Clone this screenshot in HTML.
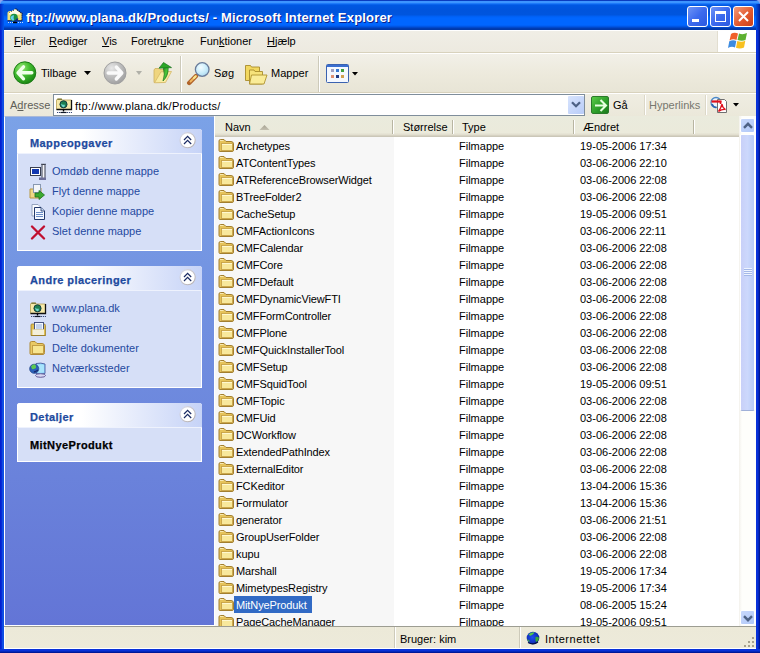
<!DOCTYPE html>
<html><head><meta charset="utf-8">
<style>
*{margin:0;padding:0;box-sizing:border-box}
html,body{width:760px;height:653px;overflow:hidden;background:#8AA4F0}
body{position:relative;font-family:"Liberation Sans",sans-serif;font-size:11px;color:#000}
.a{position:absolute}
svg{display:block}
#title{left:0;top:0;width:760px;height:30px;border-radius:5px 5px 0 0;background:linear-gradient(#0A3CC0 0px,#0A3CC0 1px,#3D95FF 1px,#3D95FF 3px,#1E7BFA 3px,#1E7BFA 4px,#0963EC 4px,#0963EC 5px,#0058E3 5px,#0054DC 10px,#0055DE 15px,#005FF2 16px,#0066FF 18px,#0066FF 25px,#005BEF 26px,#004FD8 27px,#0040BC 28px,#0038A8 29px,#0038A8 30px);}
#tedgeL{left:0;top:4px;width:4px;height:26px;background:linear-gradient(90deg,#0028C0,#0040D8 2px,#0058EC)}
#tedgeR{left:756px;top:4px;width:4px;height:26px;background:linear-gradient(90deg,#0050E0,#0038C0 2px,#00209A)}
#ttext{left:26px;top:10px;color:#fff;font-weight:bold;font-size:13px;letter-spacing:0.18px;text-shadow:1px 1px #0A1E8A;white-space:nowrap}
.tb{position:absolute;top:6px;width:21px;height:21px;border:1px solid #fff;border-radius:3px}
#frameL{left:0;top:30px;width:4px;height:623px;background:linear-gradient(90deg,#0019CF,#0831D9 2px,#166AEE 3px,#0831D9 4px)}
#frameR{left:756px;top:30px;width:4px;height:623px;background:linear-gradient(90deg,#0831D9,#0831D9 2px,#001EA0 3px,#001090)}
#frameB{left:0;top:649px;width:760px;height:4px;background:linear-gradient(#0831D9,#0831D9 2px,#001EA0 3px,#001090)}
#menu{left:4px;top:30px;width:752px;height:23px;background:linear-gradient(#F0EEE6,#EDEAE0);border-top:1px solid #fff;border-bottom:1px solid #D8D2BD}
.mi{position:absolute;top:4px;white-space:nowrap}
#logo{left:717px;top:31px;width:39px;height:21px;background:#fff;border-left:1px solid #E2DED0}
#tool{left:4px;top:53px;width:752px;height:40px;background:linear-gradient(#F2F0E8,#EDEADD 50%,#E8E5D6);border-top:1px solid #fff;border-bottom:1px solid #D8D2BD}
.tt{position:absolute;top:13px;white-space:nowrap}
.sep{position:absolute;width:2px;border-left:1px solid #CDCABA;border-right:1px solid #fff}
#addr{left:4px;top:93px;width:752px;height:23px;background:linear-gradient(#EFEDE2,#EBE8DA);border-top:1px solid #fff}
#abox{left:53px;top:94px;width:532px;height:22px;background:#fff;border:1px solid #7F8E9B}
#left{left:4px;top:116px;width:210px;height:510px;background:linear-gradient(#7BA2E7,#6375D6);border-left:1px solid #fff;border-top:1px solid #A8B8D8;border-bottom:1px solid #fff}
.panel{position:absolute;left:12px;width:185px;background:#D6DFF7;border:1px solid #fff;border-top:0;border-radius:3px 3px 0 0}
.pl{position:absolute;left:-1px;top:24px;width:185px;height:1px;background:#EEF2FD}
.ph{position:absolute;left:-1px;top:0;width:185px;height:24px;border-radius:3px 3px 0 0;background:linear-gradient(90deg,#FFFFFF 35%,#C6D3F7)}
.pt{position:absolute;left:13px;top:8px;font-weight:bold;font-size:11px;letter-spacing:0.42px;-webkit-text-stroke:0.25px #1E4A9E;color:#1E4A9E;white-space:nowrap}
.pc{position:absolute;left:162px;top:3px}
.pi{position:absolute;left:34px;color:#24499F;white-space:nowrap}
.pic{position:absolute;left:11px}
#list{left:214px;top:116px;width:525px;height:510px;background:#fff;overflow:hidden}
#hdr{position:absolute;left:0;top:0;width:525px;height:21px;background:linear-gradient(#EAEBDD 0px,#EBEADB 17px,#E2DFD0 18px,#E2DFD0 19px,#D6D2C2 19px,#D6D2C2 20px,#CBC7B8 20px)}
#sortcol{position:absolute;left:0;top:21px;width:180px;height:490px;background:#F7F7F7}
.hc{position:absolute;top:5px;white-space:nowrap}
.hs{position:absolute;top:4px;width:1px;height:14px;background:#B8B5A2;box-shadow:1px 0 #fff}
.row{position:absolute;left:0;width:525px;height:17px}
.fi{position:absolute;left:4px;top:2px}
.nm{position:absolute;left:20px;top:0;height:17px;line-height:17px;padding:1px 3px 0 2px;white-space:nowrap;letter-spacing:-0.12px}
.sel{background:#316AC5;color:#fff;padding-right:5px}
.ty{position:absolute;left:245px;top:1px;line-height:17px}
.dt{position:absolute;left:366px;top:1px;line-height:17px}
#vs{left:739px;top:116px;width:17px;height:510px;background:linear-gradient(90deg,#F3F1EC,#FEFEFB 3px)}
#status{left:4px;top:626px;width:752px;height:23px;background:linear-gradient(#ECE9D8,#EDEADA);border-top:1px solid #9D9D92;border-bottom:1px solid #fff;box-shadow:inset 1px 0 #fff}
.st{position:absolute;top:6px;white-space:nowrap}
</style></head><body>
<div id="title" class="a"></div>
<div id="tedgeL" class="a"></div><div id="tedgeR" class="a"></div>
<svg class="a" style="left:6px;top:8px" width="17" height="16" viewBox="0 0 17 16">
 <path d="M1.5 4.5L3 3H6L9.5 .8 16 5.2V12.5H1.5Z" fill="#EFE27A"/>
 <path d="M3 4.2L9.5 1.2 14.8 5.2 14 6.5H3Z" fill="#FFFBE6"/>
 <path d="M3 4.5L9 1.8" stroke="#3A3A20" stroke-width=".8" stroke-dasharray="1 1.2"/>
 <path d="M9.5 .6L16 5.4V12.5" stroke="#0C1448" stroke-width="1.2" stroke-dasharray="1.3 .7" fill="none"/>
 <path d="M1.5 12.8H16" stroke="#0C1448" stroke-width="1"/>
 <circle cx="8" cy="9.6" r="3.8" fill="#1C9040"/>
 <path d="M4.5 9.5Q5.5 7 8 7.2Q6.8 10 8.6 13Q5 12.5 4.5 9.5Z" fill="#62D0EE"/>
 <path d="M7.5 13.2Q10.5 13.2 11.8 10.5" stroke="#0A2890" stroke-width="1.6" fill="none"/>
 <path d="M2 14.5H17" stroke="#C4DAFF" stroke-dasharray="1 1"/>
 <path d="M7 14.5H11" stroke="#000" stroke-width="1.4"/>
</svg>
<div id="ttext" class="a">ftp://www.plana.dk/Products/ - Microsoft Internet Explorer</div>
<div class="tb" style="left:687px;background:linear-gradient(135deg,#6E94F6,#3C6AEE 50%,#2A58E0)"><div class="a" style="left:4px;top:12px;width:7px;height:3px;background:#fff"></div></div>
<div class="tb" style="left:710px;background:linear-gradient(135deg,#6E94F6,#3C6AEE 50%,#2A58E0)"><div class="a" style="left:4px;top:4px;width:11px;height:11px;border:1px solid #fff;border-top-width:3px"></div></div>
<div class="tb" style="left:733px;background:linear-gradient(135deg,#F39B7C,#E2592E 55%,#C8401A)">
 <svg class="a" style="left:4px;top:4px" width="11" height="11" viewBox="0 0 11 11"><path d="M1 1L10 10M10 1L1 10" stroke="#fff" stroke-width="2"/></svg></div>
<div id="frameL" class="a"></div><div id="frameR" class="a"></div><div id="frameB" class="a"></div>

<div id="menu" class="a">
 <span class="mi" style="left:10px"><u>F</u>iler</span>
 <span class="mi" style="left:45px"><u>R</u>ediger</span>
 <span class="mi" style="left:98px"><u>V</u>is</span>
 <span class="mi" style="left:127px">Foretr<u>u</u>kne</span>
 <span class="mi" style="left:196px">Fun<u>k</u>tioner</span>
 <span class="mi" style="left:263px"><u>H</u>jælp</span>
</div>
<div id="logo" class="a">
 <svg class="a" style="left:10px;top:1px" width="20" height="18" viewBox="0 0 20 18">
  <path d="M3 2Q6 0 10 1.5L8.5 8Q5 6.5 1.5 8.5Z" fill="#F0602A"/>
  <path d="M11 1.5Q15 3 19 1L17.5 8Q14 9.5 9.5 8Z" fill="#5DB030"/>
  <path d="M1.3 9.3Q5 7.5 8.3 9L7 15.5Q3.5 14 0 16Z" fill="#3D8BE0"/>
  <path d="M9.3 9Q13.5 10.5 17.3 8.8L16 15.5Q12 17.5 8 15.8Z" fill="#F8C020"/>
 </svg>
</div>

<div id="tool" class="a">
 <svg class="a" style="left:9px;top:7px" width="24" height="24" viewBox="0 0 24 24">
  <defs><radialGradient id="gb" cx="35%" cy="28%" r="80%"><stop offset="0" stop-color="#9AE87A"/><stop offset=".45" stop-color="#44BE30"/><stop offset="1" stop-color="#158010"/></radialGradient></defs>
  <circle cx="11.8" cy="11.8" r="11" fill="url(#gb)" stroke="#1A7A14" stroke-width="1"/>
  <path d="M10.5 5.8L5 11.8 10.5 17.8M5.6 11.8H18.8" stroke="#F0FFEA" stroke-width="3.4" fill="none" stroke-linecap="round" stroke-linejoin="round"/>
 </svg>
 <span class="tt" style="left:37px">Tilbage</span>
 <svg class="a" style="left:80px;top:17px" width="7" height="4" viewBox="0 0 7 4"><path d="M0 0H7L3.5 4Z" fill="#000"/></svg>
 <svg class="a" style="left:99px;top:7px" width="24" height="24" viewBox="0 0 24 24">
  <defs><radialGradient id="gg" cx="35%" cy="28%" r="80%"><stop offset="0" stop-color="#E8E8E8"/><stop offset=".5" stop-color="#BEBEBE"/><stop offset="1" stop-color="#9C9C9C"/></radialGradient></defs>
  <circle cx="12" cy="12" r="11" fill="url(#gg)" stroke="#A0A0A0"/>
  <path d="M13.3 6L18.8 12 13.3 18M18.2 12H5.2" stroke="#FAFAFA" stroke-width="3.4" fill="none" stroke-linecap="round" stroke-linejoin="round"/>
 </svg>
 <svg class="a" style="left:132px;top:17px" width="6" height="4" viewBox="0 0 6 4"><path d="M0 0H6L3 4Z" fill="#B0B0A8"/></svg>
 <svg class="a" style="left:148px;top:6px" width="22" height="25" viewBox="0 0 22 25">
  <defs><linearGradient id="ga" x1="0" y1="0" x2="1" y2="1"><stop offset="0" stop-color="#1E8A1A"/><stop offset=".5" stop-color="#4CC83A"/><stop offset="1" stop-color="#18801A"/></linearGradient></defs>
  <path d="M2 22.5V10L3 8.5H7L8 9.5H12V22.5Z" fill="#EFD57E" stroke="#CDB060" stroke-width=".8"/>
  <path d="M2.5 22.8L13.5 22.5 19.5 11.5 9 11.8Z" fill="#F9EBA0" stroke="#D4B868" stroke-width=".8"/>
  <path d="M11.2 7.5H16.2Q16.5 16 11 21Q13.5 14 11.2 7.5Z" fill="url(#ga)" stroke="#15701A" stroke-width=".7"/>
  <path d="M7 8.2L11.5 2.5 19.5 7.6Z" fill="#2AA626" stroke="#15701A" stroke-width=".7" stroke-linejoin="round"/>
 </svg>
 <div class="sep" style="left:176px;top:2px;height:36px"></div>
 <svg class="a" style="left:182px;top:8px" width="26" height="24" viewBox="0 0 26 24">
  <defs><radialGradient id="lens" cx="40%" cy="35%" r="70%"><stop offset="0" stop-color="#F4FCFF"/><stop offset=".6" stop-color="#C8ECFA"/><stop offset="1" stop-color="#A8D4EC"/></radialGradient></defs>
  <path d="M10 14L3.2 21" stroke="#B0642A" stroke-width="4.4" stroke-linecap="round"/>
  <path d="M10 14L4.5 19.5" stroke="#F2B860" stroke-width="1.8" stroke-linecap="round"/>
  <path d="M9.5 14.5L8 16" stroke="#F8E890" stroke-width="2" stroke-linecap="round"/>
  <circle cx="16.2" cy="7.5" r="6.8" fill="url(#lens)" stroke="#6A7C9A" stroke-width="1.3"/>
 </svg>
 <span class="tt" style="left:210px">Søg</span>
 <svg class="a" style="left:240px;top:10px" width="24" height="21" viewBox="0 0 24 21">
  <path d="M1.5 16.5V1.5H6.5L7.5 3H15.5V16.5Z" fill="#F2D860" stroke="#A88C2C" stroke-width=".9"/>
  <path d="M5.5 20V6H10L11 7.5H18.5V20Z" fill="#F6E27A" stroke="#A88C2C" stroke-width=".9"/>
  <path d="M5.5 20L7.5 11H23L20 20Z" fill="#FAEC98" stroke="#B09430" stroke-width=".9"/>
 </svg>
 <span class="tt" style="left:267px">Mapper</span>
 <div class="sep" style="left:314px;top:2px;height:36px"></div>
 <svg class="a" style="left:322px;top:10px" width="24" height="20" viewBox="0 0 24 20">
  <rect x=".5" y=".5" width="22" height="18" rx="1" fill="#F4F8FF" stroke="#3A62B0"/>
  <rect x="1" y="1" width="21" height="2" fill="#3A6ED0"/>
  <rect x="5" y="5" width="3" height="3" fill="#A0A0C0"/><rect x="10" y="5" width="3" height="3" fill="#3878D0"/><rect x="15" y="5" width="3" height="3" fill="#40A040"/>
  <rect x="5" y="11" width="3" height="3" fill="#E09070"/><rect x="10" y="11" width="3" height="3" fill="#203880"/><rect x="15" y="11" width="3" height="3" fill="#D0A050"/>
 </svg>
 <svg class="a" style="left:348px;top:18px" width="6" height="4" viewBox="0 0 6 4"><path d="M0 0H6L3 3.5Z" fill="#000"/></svg>
</div>

<div id="addr" class="a">
 <span class="a" style="left:6px;top:5px;color:#5F5F58;white-space:nowrap">A<u>d</u>resse</span>
</div>
<div id="abox" class="a">
 <svg class="a" style="left:1px;top:2px" width="18" height="17" viewBox="0 0 18 17">
   <path d="M1.5 12.5V3L2.5 2H6.5L7.5 3H16.5V12.5Z" fill="#F6E9A8" stroke="#B8A050" stroke-width=".8"/>
   <path d="M2.3 2.2H7" stroke="#606020" stroke-width="1"/>
   <path d="M16.5 3V12.5H1.5" stroke="#101010" stroke-width="1.3" fill="none"/>
   <circle cx="8.5" cy="7.3" r="3.6" fill="#1E8050" stroke="#0A2838" stroke-width=".8"/>
   <path d="M6 6.5Q7.5 8.5 9.5 7.5Q10.5 9 9 10.3Q6.5 10 6 6.5Z" fill="#70D8D0"/>
   <path d="M8.5 12.5V14.5" stroke="#000" stroke-width="1.4"/>
   <path d="M2 15.5H17" stroke="#3A4A78" stroke-dasharray="1.2 .8"/>
   <path d="M5.5 15.5H11.5" stroke="#101828" stroke-width="1.2"/>
  </svg>
 <span class="a" style="left:21px;top:5px;letter-spacing:0.24px;white-space:nowrap">ftp://www.plana.dk/Products/</span>
 <div class="a" style="left:514px;top:1px;width:16px;height:18px;background:linear-gradient(135deg,#D8E4FD,#B8CCF8);border-radius:1px">
  <svg class="a" style="left:3px;top:5px" width="10" height="7" viewBox="0 0 10 7"><path d="M1 1.2L5 5.2 9 1.2" stroke="#4D6185" stroke-width="2.3" fill="none"/></svg>
 </div>
</div>
<div class="a" style="left:591px;top:96px;width:18px;height:18px;border-radius:2px;background:linear-gradient(135deg,#5ACB48,#2A9A28 60%,#1D7A1D);border:1px solid #2A7A2A">
 <svg class="a" style="left:1px;top:1px" width="15" height="15" viewBox="0 0 15 15"><path d="M2 7.5H13M7.5 2L13 7.5 7.5 13" stroke="#E8FFE0" stroke-width="2.1" fill="none"/></svg>
</div>
<span class="a" style="left:613px;top:99px;white-space:nowrap">Gå</span>
<div class="sep a" style="left:644px;top:95px;height:20px;border-left-color:#DCD8C8"></div>
<span class="a" style="left:649px;top:99px;color:#77776E;white-space:nowrap">Hyperlinks</span>
<div class="sep a" style="left:705px;top:95px;height:20px;border-left-color:#DCD8C8"></div>
<svg class="a" style="left:710px;top:96px" width="18" height="18" viewBox="0 0 18 18">
 <circle cx="6" cy="6.5" r="5" fill="#EEF4FA" stroke="#4A88C8" stroke-width="1.3"/>
 <path d="M2 8Q3 11 6 11.5" stroke="#2C60B0" stroke-width="1.6" fill="none"/>
 <path d="M7.5 3.5H14.5L16.5 5.5V16.5H7.5Z" fill="#fff" stroke="#707070"/>
 <path d="M1.5 5.5H11.5" stroke="#E0101C" stroke-width="2.2"/>
 <path d="M10.5 5V8" stroke="#E0101C" stroke-width="1.6"/>
 <path d="M8.5 15.5Q11 12 12 8Q12.5 12 15.5 13.5Q12 13 8.5 15.5Z" fill="none" stroke="#E0101C" stroke-width="1.3"/>
</svg>
<svg class="a" style="left:733px;top:103px" width="6" height="4" viewBox="0 0 6 4"><path d="M0 0H6L3 3.5Z" fill="#000"/></svg>

<div id="left" class="a">
 <div class="panel" style="top:12px;height:122px"><div class="ph"><span class="pt">Mappeopgaver</span><div class="pc"><svg width="18" height="18" viewBox="0 0 18 18"><defs><linearGradient id="cr" x1="0" y1="0" x2="1" y2="1"><stop offset="0" stop-color="#D8DCEE"/><stop offset="1" stop-color="#B4ACA8"/></linearGradient></defs><circle cx="8.6" cy="8.2" r="7.6" fill="#fff" stroke="url(#cr)" stroke-width="1.1"/><path d="M5 8L8.6 4.4 12.2 8M5 12L8.6 8.4 12.2 12" fill="none" stroke="#1C2C64" stroke-width="1.25"/></svg></div></div><div class="pl"></div>
  <svg class="pic" style="top:34px" width="18" height="18" viewBox="0 0 18 18">
   <rect x="1.5" y="4.5" width="10" height="8" fill="#fff" stroke="#3A3F50"/><rect x="3" y="6" width="7" height="5" fill="#1238B0"/>
   <rect x="13" y="1.5" width="3" height="14" rx="1" fill="#F4F4F8" stroke="#383C4C" stroke-width="1"/>
   <path d="M12 1.3H17" stroke="#383C4C"/>
   <rect x="10" y="14.5" width="7" height="2.5" fill="#6C6E98"/>
  </svg>
  <span class="pi" style="top:36px">Omdøb denne mappe</span>
  <svg class="pic" style="top:55px" width="17" height="16" viewBox="0 0 17 16">
   <path d="M1 5H6L7 4H12V14H1Z" fill="#EFD888" stroke="#B89840"/><rect x="4.5" y=".5" width="7" height="8" fill="#F4F6FA" stroke="#8898B0"/>
   <path d="M6 9H10V6.5L15.5 11 10 15.5V13H6Z" fill="#3CAA30" stroke="#1D6E1D" stroke-width=".8"/>
  </svg>
  <span class="pi" style="top:56px">Flyt denne mappe</span>
  <svg class="pic" style="top:74px" width="17" height="17" viewBox="0 0 17 17">
   <path d="M3 1.5H9L11 3.5V13H3Z" fill="#FAFCFF" stroke="#8C9CB8" stroke-width=".9"/>
   <path d="M5.5 4.5H12L15.5 8V16.5H5.5Z" fill="#F4F8FF" stroke="#22386A" stroke-width="1"/>
   <path d="M12 4.5V8H15.5" fill="#C8D8F0" stroke="#22386A" stroke-width=".8"/>
   <path d="M7 9.5H14M7 11.5H14M7 13.5H14" stroke="#5A80C0" stroke-width=".9"/>
  </svg>
  <span class="pi" style="top:76px">Kopier denne mappe</span>
  <svg class="pic" style="top:94px" width="17" height="17" viewBox="0 0 17 17">
   <path d="M3 3.5L15 15.5M15 3.5L3 15.5" stroke="#C01030" stroke-width="2.3" stroke-linecap="round"/>
  </svg>
  <span class="pi" style="top:96px">Slet denne mappe</span>
 </div>
 <div class="panel" style="top:149px;height:122px"><div class="ph"><span class="pt">Andre placeringer</span><div class="pc"><svg width="18" height="18" viewBox="0 0 18 18"><defs><linearGradient id="cr" x1="0" y1="0" x2="1" y2="1"><stop offset="0" stop-color="#D8DCEE"/><stop offset="1" stop-color="#B4ACA8"/></linearGradient></defs><circle cx="8.6" cy="8.2" r="7.6" fill="#fff" stroke="url(#cr)" stroke-width="1.1"/><path d="M5 8L8.6 4.4 12.2 8M5 12L8.6 8.4 12.2 12" fill="none" stroke="#1C2C64" stroke-width="1.25"/></svg></div></div><div class="pl"></div>
  <svg class="pic" style="top:35px" width="18" height="17" viewBox="0 0 18 17">
   <path d="M1.5 12.5V3L2.5 2H6.5L7.5 3H16.5V12.5Z" fill="#F6E9A8" stroke="#B8A050" stroke-width=".8"/>
   <path d="M2.3 2.2H7" stroke="#606020" stroke-width="1"/>
   <path d="M16.5 3V12.5H1.5" stroke="#101010" stroke-width="1.3" fill="none"/>
   <circle cx="8.5" cy="7.3" r="3.6" fill="#1E8050" stroke="#0A2838" stroke-width=".8"/>
   <path d="M6 6.5Q7.5 8.5 9.5 7.5Q10.5 9 9 10.3Q6.5 10 6 6.5Z" fill="#70D8D0"/>
   <path d="M8.5 12.5V14.5" stroke="#000" stroke-width="1.4"/>
   <path d="M2 15.5H17" stroke="#3A4A78" stroke-dasharray="1.2 .8"/>
   <path d="M5.5 15.5H11.5" stroke="#101828" stroke-width="1.2"/>
  </svg>
  <span class="pi" style="top:36px">www.plana.dk</span>
  <svg class="pic" style="top:54px" width="18" height="17" viewBox="0 0 18 17">
   <path d="M2 15.5V5Q2 4 3 4H15Q16.5 4 16.5 5.5V15.5Z" fill="#E2C050" stroke="#A08430" stroke-width=".8"/>
   <rect x="5.5" y="2.5" width="9" height="8" fill="#F2F8FF" stroke="#3A4878" stroke-width=".9"/>
   <path d="M7 5H13M7 7H13M7 9H13" stroke="#7C9AD0" stroke-width=".8"/>
   <path d="M3.5 9.5H15V15.5H3.5Z" fill="#F4F0DC"/>
   <path d="M3.5 9.5H15" stroke="#D8CCA0" stroke-width=".8"/>
   <path d="M2 15.5H16.5" stroke="#9C8030" stroke-width="1"/>
  </svg>
  <span class="pi" style="top:56px">Dokumenter</span>
  <svg class="pic" style="top:75px" width="16" height="14" viewBox="0 0 16 14">
   <path d="M1 12.5V2Q1 .5 2.5 .5H6L8 2.5H13Q15.5 2.5 15.5 5V11.5Q15.5 13.5 14 13.5H2Q1 13.5 1 12.5Z" fill="#E9C964" stroke="#B08A35"/>
   <rect x="3.5" y="4.5" width="11" height="8" fill="#F7E590" stroke="#C39E45"/>
  </svg>
  <span class="pi" style="top:76px">Delte dokumenter</span>
  <svg class="pic" style="top:94px" width="18" height="18" viewBox="0 0 18 18">
   <path d="M7 3.5Q12 2.5 16 4V13.5Q12 15 7 13.5Z" fill="#8FD4F8" stroke="#4A5AA0" stroke-width=".9"/>
   <path d="M8 5Q12 4 15 5V12Q12 13 8 12Z" fill="#A8E4FC"/>
   <ellipse cx="11.5" cy="15.5" rx="5" ry="1.8" fill="#D8D8F4" stroke="#5A5090" stroke-width=".9"/>
   <circle cx="5.2" cy="8.8" r="4.6" fill="#2A60B8" stroke="#1A3A80" stroke-width=".6"/>
   <path d="M2 6.5Q3.5 4.2 5.5 4.2Q7.5 5 7 8Q5 9.5 3 9Z" fill="#5CC850"/>
   <path d="M5 12Q7 11.5 9 10" stroke="#1A2A70" stroke-width="1.4" fill="none"/>
  </svg>
  <span class="pi" style="top:96px">Netværkssteder</span>
 </div>
 <div class="panel" style="top:286px;height:59px"><div class="ph"><span class="pt">Detaljer</span><div class="pc"><svg width="18" height="18" viewBox="0 0 18 18"><defs><linearGradient id="cr" x1="0" y1="0" x2="1" y2="1"><stop offset="0" stop-color="#D8DCEE"/><stop offset="1" stop-color="#B4ACA8"/></linearGradient></defs><circle cx="8.6" cy="8.2" r="7.6" fill="#fff" stroke="url(#cr)" stroke-width="1.1"/><path d="M5 8L8.6 4.4 12.2 8M5 12L8.6 8.4 12.2 12" fill="none" stroke="#1C2C64" stroke-width="1.25"/></svg></div></div><div class="pl"></div>
  <span class="pi" style="left:12px;top:36px;color:#000;font-weight:bold;letter-spacing:0.4px;-webkit-text-stroke:0.25px #000">MitNyeProdukt</span>
 </div>
</div>

<div id="list" class="a">
 <div id="sortcol"></div>
 <div class="a" style="left:0;top:0;width:1px;height:510px;background:#fff;z-index:2"></div>
 <div id="hdr">
  <span class="hc" style="left:11px">Navn</span>
  <svg class="a" style="left:45px;top:9px" width="11" height="5" viewBox="0 0 11 5"><defs><linearGradient id="sa" x1="0" y1="0" x2="0" y2="1"><stop offset="0" stop-color="#A6A292"/><stop offset="1" stop-color="#C4C0B0"/></linearGradient></defs><path d="M.5 5H10.5L5.5 0Z" fill="url(#sa)"/></svg>
  <span class="hs" style="left:178px"></span>
  <span class="hc" style="left:189px">Størrelse</span>
  <span class="hs" style="left:238px"></span>
  <span class="hc" style="left:248px">Type</span>
  <span class="hs" style="left:359px"></span>
  <span class="hc" style="left:369px">Ændret</span>
  <span class="hs" style="left:479px"></span>
 </div>
<div class="row" style="top:21px"><svg class="fi" width="16" height="13" viewBox="0 0 16 13"><path d="M1 11.5V2Q1 .5 2.5 .5H6L8 2.5H13Q15.5 2.5 15.5 5V11Q15.5 12.5 14 12.5H2Q1 12.5 1 11.5Z" fill="#E6C35A" stroke="#A27F30"/><path d="M2 1.5H5.5" stroke="#F8E8B0"/><rect x="3.5" y="4.5" width="11" height="7" fill="#F8E89C" stroke="#C8A448" stroke-width=".9"/><path d="M4 5.5h10" stroke="#FFF8D0"/></svg><span class="nm">Archetypes</span><span class="ty">Filmappe</span><span class="dt">19-05-2006 17:34</span></div>
<div class="row" style="top:38px"><svg class="fi" width="16" height="13" viewBox="0 0 16 13"><path d="M1 11.5V2Q1 .5 2.5 .5H6L8 2.5H13Q15.5 2.5 15.5 5V11Q15.5 12.5 14 12.5H2Q1 12.5 1 11.5Z" fill="#E6C35A" stroke="#A27F30"/><path d="M2 1.5H5.5" stroke="#F8E8B0"/><rect x="3.5" y="4.5" width="11" height="7" fill="#F8E89C" stroke="#C8A448" stroke-width=".9"/><path d="M4 5.5h10" stroke="#FFF8D0"/></svg><span class="nm">ATContentTypes</span><span class="ty">Filmappe</span><span class="dt">03-06-2006 22:10</span></div>
<div class="row" style="top:55px"><svg class="fi" width="16" height="13" viewBox="0 0 16 13"><path d="M1 11.5V2Q1 .5 2.5 .5H6L8 2.5H13Q15.5 2.5 15.5 5V11Q15.5 12.5 14 12.5H2Q1 12.5 1 11.5Z" fill="#E6C35A" stroke="#A27F30"/><path d="M2 1.5H5.5" stroke="#F8E8B0"/><rect x="3.5" y="4.5" width="11" height="7" fill="#F8E89C" stroke="#C8A448" stroke-width=".9"/><path d="M4 5.5h10" stroke="#FFF8D0"/></svg><span class="nm">ATReferenceBrowserWidget</span><span class="ty">Filmappe</span><span class="dt">03-06-2006 22:08</span></div>
<div class="row" style="top:72px"><svg class="fi" width="16" height="13" viewBox="0 0 16 13"><path d="M1 11.5V2Q1 .5 2.5 .5H6L8 2.5H13Q15.5 2.5 15.5 5V11Q15.5 12.5 14 12.5H2Q1 12.5 1 11.5Z" fill="#E6C35A" stroke="#A27F30"/><path d="M2 1.5H5.5" stroke="#F8E8B0"/><rect x="3.5" y="4.5" width="11" height="7" fill="#F8E89C" stroke="#C8A448" stroke-width=".9"/><path d="M4 5.5h10" stroke="#FFF8D0"/></svg><span class="nm">BTreeFolder2</span><span class="ty">Filmappe</span><span class="dt">03-06-2006 22:08</span></div>
<div class="row" style="top:89px"><svg class="fi" width="16" height="13" viewBox="0 0 16 13"><path d="M1 11.5V2Q1 .5 2.5 .5H6L8 2.5H13Q15.5 2.5 15.5 5V11Q15.5 12.5 14 12.5H2Q1 12.5 1 11.5Z" fill="#E6C35A" stroke="#A27F30"/><path d="M2 1.5H5.5" stroke="#F8E8B0"/><rect x="3.5" y="4.5" width="11" height="7" fill="#F8E89C" stroke="#C8A448" stroke-width=".9"/><path d="M4 5.5h10" stroke="#FFF8D0"/></svg><span class="nm">CacheSetup</span><span class="ty">Filmappe</span><span class="dt">19-05-2006 09:51</span></div>
<div class="row" style="top:106px"><svg class="fi" width="16" height="13" viewBox="0 0 16 13"><path d="M1 11.5V2Q1 .5 2.5 .5H6L8 2.5H13Q15.5 2.5 15.5 5V11Q15.5 12.5 14 12.5H2Q1 12.5 1 11.5Z" fill="#E6C35A" stroke="#A27F30"/><path d="M2 1.5H5.5" stroke="#F8E8B0"/><rect x="3.5" y="4.5" width="11" height="7" fill="#F8E89C" stroke="#C8A448" stroke-width=".9"/><path d="M4 5.5h10" stroke="#FFF8D0"/></svg><span class="nm">CMFActionIcons</span><span class="ty">Filmappe</span><span class="dt">03-06-2006 22:11</span></div>
<div class="row" style="top:123px"><svg class="fi" width="16" height="13" viewBox="0 0 16 13"><path d="M1 11.5V2Q1 .5 2.5 .5H6L8 2.5H13Q15.5 2.5 15.5 5V11Q15.5 12.5 14 12.5H2Q1 12.5 1 11.5Z" fill="#E6C35A" stroke="#A27F30"/><path d="M2 1.5H5.5" stroke="#F8E8B0"/><rect x="3.5" y="4.5" width="11" height="7" fill="#F8E89C" stroke="#C8A448" stroke-width=".9"/><path d="M4 5.5h10" stroke="#FFF8D0"/></svg><span class="nm">CMFCalendar</span><span class="ty">Filmappe</span><span class="dt">03-06-2006 22:08</span></div>
<div class="row" style="top:140px"><svg class="fi" width="16" height="13" viewBox="0 0 16 13"><path d="M1 11.5V2Q1 .5 2.5 .5H6L8 2.5H13Q15.5 2.5 15.5 5V11Q15.5 12.5 14 12.5H2Q1 12.5 1 11.5Z" fill="#E6C35A" stroke="#A27F30"/><path d="M2 1.5H5.5" stroke="#F8E8B0"/><rect x="3.5" y="4.5" width="11" height="7" fill="#F8E89C" stroke="#C8A448" stroke-width=".9"/><path d="M4 5.5h10" stroke="#FFF8D0"/></svg><span class="nm">CMFCore</span><span class="ty">Filmappe</span><span class="dt">03-06-2006 22:08</span></div>
<div class="row" style="top:157px"><svg class="fi" width="16" height="13" viewBox="0 0 16 13"><path d="M1 11.5V2Q1 .5 2.5 .5H6L8 2.5H13Q15.5 2.5 15.5 5V11Q15.5 12.5 14 12.5H2Q1 12.5 1 11.5Z" fill="#E6C35A" stroke="#A27F30"/><path d="M2 1.5H5.5" stroke="#F8E8B0"/><rect x="3.5" y="4.5" width="11" height="7" fill="#F8E89C" stroke="#C8A448" stroke-width=".9"/><path d="M4 5.5h10" stroke="#FFF8D0"/></svg><span class="nm">CMFDefault</span><span class="ty">Filmappe</span><span class="dt">03-06-2006 22:08</span></div>
<div class="row" style="top:174px"><svg class="fi" width="16" height="13" viewBox="0 0 16 13"><path d="M1 11.5V2Q1 .5 2.5 .5H6L8 2.5H13Q15.5 2.5 15.5 5V11Q15.5 12.5 14 12.5H2Q1 12.5 1 11.5Z" fill="#E6C35A" stroke="#A27F30"/><path d="M2 1.5H5.5" stroke="#F8E8B0"/><rect x="3.5" y="4.5" width="11" height="7" fill="#F8E89C" stroke="#C8A448" stroke-width=".9"/><path d="M4 5.5h10" stroke="#FFF8D0"/></svg><span class="nm">CMFDynamicViewFTI</span><span class="ty">Filmappe</span><span class="dt">03-06-2006 22:08</span></div>
<div class="row" style="top:191px"><svg class="fi" width="16" height="13" viewBox="0 0 16 13"><path d="M1 11.5V2Q1 .5 2.5 .5H6L8 2.5H13Q15.5 2.5 15.5 5V11Q15.5 12.5 14 12.5H2Q1 12.5 1 11.5Z" fill="#E6C35A" stroke="#A27F30"/><path d="M2 1.5H5.5" stroke="#F8E8B0"/><rect x="3.5" y="4.5" width="11" height="7" fill="#F8E89C" stroke="#C8A448" stroke-width=".9"/><path d="M4 5.5h10" stroke="#FFF8D0"/></svg><span class="nm">CMFFormController</span><span class="ty">Filmappe</span><span class="dt">03-06-2006 22:08</span></div>
<div class="row" style="top:208px"><svg class="fi" width="16" height="13" viewBox="0 0 16 13"><path d="M1 11.5V2Q1 .5 2.5 .5H6L8 2.5H13Q15.5 2.5 15.5 5V11Q15.5 12.5 14 12.5H2Q1 12.5 1 11.5Z" fill="#E6C35A" stroke="#A27F30"/><path d="M2 1.5H5.5" stroke="#F8E8B0"/><rect x="3.5" y="4.5" width="11" height="7" fill="#F8E89C" stroke="#C8A448" stroke-width=".9"/><path d="M4 5.5h10" stroke="#FFF8D0"/></svg><span class="nm">CMFPlone</span><span class="ty">Filmappe</span><span class="dt">03-06-2006 22:08</span></div>
<div class="row" style="top:225px"><svg class="fi" width="16" height="13" viewBox="0 0 16 13"><path d="M1 11.5V2Q1 .5 2.5 .5H6L8 2.5H13Q15.5 2.5 15.5 5V11Q15.5 12.5 14 12.5H2Q1 12.5 1 11.5Z" fill="#E6C35A" stroke="#A27F30"/><path d="M2 1.5H5.5" stroke="#F8E8B0"/><rect x="3.5" y="4.5" width="11" height="7" fill="#F8E89C" stroke="#C8A448" stroke-width=".9"/><path d="M4 5.5h10" stroke="#FFF8D0"/></svg><span class="nm">CMFQuickInstallerTool</span><span class="ty">Filmappe</span><span class="dt">03-06-2006 22:08</span></div>
<div class="row" style="top:242px"><svg class="fi" width="16" height="13" viewBox="0 0 16 13"><path d="M1 11.5V2Q1 .5 2.5 .5H6L8 2.5H13Q15.5 2.5 15.5 5V11Q15.5 12.5 14 12.5H2Q1 12.5 1 11.5Z" fill="#E6C35A" stroke="#A27F30"/><path d="M2 1.5H5.5" stroke="#F8E8B0"/><rect x="3.5" y="4.5" width="11" height="7" fill="#F8E89C" stroke="#C8A448" stroke-width=".9"/><path d="M4 5.5h10" stroke="#FFF8D0"/></svg><span class="nm">CMFSetup</span><span class="ty">Filmappe</span><span class="dt">03-06-2006 22:08</span></div>
<div class="row" style="top:259px"><svg class="fi" width="16" height="13" viewBox="0 0 16 13"><path d="M1 11.5V2Q1 .5 2.5 .5H6L8 2.5H13Q15.5 2.5 15.5 5V11Q15.5 12.5 14 12.5H2Q1 12.5 1 11.5Z" fill="#E6C35A" stroke="#A27F30"/><path d="M2 1.5H5.5" stroke="#F8E8B0"/><rect x="3.5" y="4.5" width="11" height="7" fill="#F8E89C" stroke="#C8A448" stroke-width=".9"/><path d="M4 5.5h10" stroke="#FFF8D0"/></svg><span class="nm">CMFSquidTool</span><span class="ty">Filmappe</span><span class="dt">19-05-2006 09:51</span></div>
<div class="row" style="top:276px"><svg class="fi" width="16" height="13" viewBox="0 0 16 13"><path d="M1 11.5V2Q1 .5 2.5 .5H6L8 2.5H13Q15.5 2.5 15.5 5V11Q15.5 12.5 14 12.5H2Q1 12.5 1 11.5Z" fill="#E6C35A" stroke="#A27F30"/><path d="M2 1.5H5.5" stroke="#F8E8B0"/><rect x="3.5" y="4.5" width="11" height="7" fill="#F8E89C" stroke="#C8A448" stroke-width=".9"/><path d="M4 5.5h10" stroke="#FFF8D0"/></svg><span class="nm">CMFTopic</span><span class="ty">Filmappe</span><span class="dt">03-06-2006 22:08</span></div>
<div class="row" style="top:293px"><svg class="fi" width="16" height="13" viewBox="0 0 16 13"><path d="M1 11.5V2Q1 .5 2.5 .5H6L8 2.5H13Q15.5 2.5 15.5 5V11Q15.5 12.5 14 12.5H2Q1 12.5 1 11.5Z" fill="#E6C35A" stroke="#A27F30"/><path d="M2 1.5H5.5" stroke="#F8E8B0"/><rect x="3.5" y="4.5" width="11" height="7" fill="#F8E89C" stroke="#C8A448" stroke-width=".9"/><path d="M4 5.5h10" stroke="#FFF8D0"/></svg><span class="nm">CMFUid</span><span class="ty">Filmappe</span><span class="dt">03-06-2006 22:08</span></div>
<div class="row" style="top:310px"><svg class="fi" width="16" height="13" viewBox="0 0 16 13"><path d="M1 11.5V2Q1 .5 2.5 .5H6L8 2.5H13Q15.5 2.5 15.5 5V11Q15.5 12.5 14 12.5H2Q1 12.5 1 11.5Z" fill="#E6C35A" stroke="#A27F30"/><path d="M2 1.5H5.5" stroke="#F8E8B0"/><rect x="3.5" y="4.5" width="11" height="7" fill="#F8E89C" stroke="#C8A448" stroke-width=".9"/><path d="M4 5.5h10" stroke="#FFF8D0"/></svg><span class="nm">DCWorkflow</span><span class="ty">Filmappe</span><span class="dt">03-06-2006 22:08</span></div>
<div class="row" style="top:327px"><svg class="fi" width="16" height="13" viewBox="0 0 16 13"><path d="M1 11.5V2Q1 .5 2.5 .5H6L8 2.5H13Q15.5 2.5 15.5 5V11Q15.5 12.5 14 12.5H2Q1 12.5 1 11.5Z" fill="#E6C35A" stroke="#A27F30"/><path d="M2 1.5H5.5" stroke="#F8E8B0"/><rect x="3.5" y="4.5" width="11" height="7" fill="#F8E89C" stroke="#C8A448" stroke-width=".9"/><path d="M4 5.5h10" stroke="#FFF8D0"/></svg><span class="nm">ExtendedPathIndex</span><span class="ty">Filmappe</span><span class="dt">03-06-2006 22:08</span></div>
<div class="row" style="top:344px"><svg class="fi" width="16" height="13" viewBox="0 0 16 13"><path d="M1 11.5V2Q1 .5 2.5 .5H6L8 2.5H13Q15.5 2.5 15.5 5V11Q15.5 12.5 14 12.5H2Q1 12.5 1 11.5Z" fill="#E6C35A" stroke="#A27F30"/><path d="M2 1.5H5.5" stroke="#F8E8B0"/><rect x="3.5" y="4.5" width="11" height="7" fill="#F8E89C" stroke="#C8A448" stroke-width=".9"/><path d="M4 5.5h10" stroke="#FFF8D0"/></svg><span class="nm">ExternalEditor</span><span class="ty">Filmappe</span><span class="dt">03-06-2006 22:08</span></div>
<div class="row" style="top:361px"><svg class="fi" width="16" height="13" viewBox="0 0 16 13"><path d="M1 11.5V2Q1 .5 2.5 .5H6L8 2.5H13Q15.5 2.5 15.5 5V11Q15.5 12.5 14 12.5H2Q1 12.5 1 11.5Z" fill="#E6C35A" stroke="#A27F30"/><path d="M2 1.5H5.5" stroke="#F8E8B0"/><rect x="3.5" y="4.5" width="11" height="7" fill="#F8E89C" stroke="#C8A448" stroke-width=".9"/><path d="M4 5.5h10" stroke="#FFF8D0"/></svg><span class="nm">FCKeditor</span><span class="ty">Filmappe</span><span class="dt">13-04-2006 15:36</span></div>
<div class="row" style="top:378px"><svg class="fi" width="16" height="13" viewBox="0 0 16 13"><path d="M1 11.5V2Q1 .5 2.5 .5H6L8 2.5H13Q15.5 2.5 15.5 5V11Q15.5 12.5 14 12.5H2Q1 12.5 1 11.5Z" fill="#E6C35A" stroke="#A27F30"/><path d="M2 1.5H5.5" stroke="#F8E8B0"/><rect x="3.5" y="4.5" width="11" height="7" fill="#F8E89C" stroke="#C8A448" stroke-width=".9"/><path d="M4 5.5h10" stroke="#FFF8D0"/></svg><span class="nm">Formulator</span><span class="ty">Filmappe</span><span class="dt">13-04-2006 15:36</span></div>
<div class="row" style="top:395px"><svg class="fi" width="16" height="13" viewBox="0 0 16 13"><path d="M1 11.5V2Q1 .5 2.5 .5H6L8 2.5H13Q15.5 2.5 15.5 5V11Q15.5 12.5 14 12.5H2Q1 12.5 1 11.5Z" fill="#E6C35A" stroke="#A27F30"/><path d="M2 1.5H5.5" stroke="#F8E8B0"/><rect x="3.5" y="4.5" width="11" height="7" fill="#F8E89C" stroke="#C8A448" stroke-width=".9"/><path d="M4 5.5h10" stroke="#FFF8D0"/></svg><span class="nm">generator</span><span class="ty">Filmappe</span><span class="dt">03-06-2006 21:51</span></div>
<div class="row" style="top:412px"><svg class="fi" width="16" height="13" viewBox="0 0 16 13"><path d="M1 11.5V2Q1 .5 2.5 .5H6L8 2.5H13Q15.5 2.5 15.5 5V11Q15.5 12.5 14 12.5H2Q1 12.5 1 11.5Z" fill="#E6C35A" stroke="#A27F30"/><path d="M2 1.5H5.5" stroke="#F8E8B0"/><rect x="3.5" y="4.5" width="11" height="7" fill="#F8E89C" stroke="#C8A448" stroke-width=".9"/><path d="M4 5.5h10" stroke="#FFF8D0"/></svg><span class="nm">GroupUserFolder</span><span class="ty">Filmappe</span><span class="dt">03-06-2006 22:08</span></div>
<div class="row" style="top:429px"><svg class="fi" width="16" height="13" viewBox="0 0 16 13"><path d="M1 11.5V2Q1 .5 2.5 .5H6L8 2.5H13Q15.5 2.5 15.5 5V11Q15.5 12.5 14 12.5H2Q1 12.5 1 11.5Z" fill="#E6C35A" stroke="#A27F30"/><path d="M2 1.5H5.5" stroke="#F8E8B0"/><rect x="3.5" y="4.5" width="11" height="7" fill="#F8E89C" stroke="#C8A448" stroke-width=".9"/><path d="M4 5.5h10" stroke="#FFF8D0"/></svg><span class="nm">kupu</span><span class="ty">Filmappe</span><span class="dt">03-06-2006 22:08</span></div>
<div class="row" style="top:446px"><svg class="fi" width="16" height="13" viewBox="0 0 16 13"><path d="M1 11.5V2Q1 .5 2.5 .5H6L8 2.5H13Q15.5 2.5 15.5 5V11Q15.5 12.5 14 12.5H2Q1 12.5 1 11.5Z" fill="#E6C35A" stroke="#A27F30"/><path d="M2 1.5H5.5" stroke="#F8E8B0"/><rect x="3.5" y="4.5" width="11" height="7" fill="#F8E89C" stroke="#C8A448" stroke-width=".9"/><path d="M4 5.5h10" stroke="#FFF8D0"/></svg><span class="nm">Marshall</span><span class="ty">Filmappe</span><span class="dt">19-05-2006 17:34</span></div>
<div class="row" style="top:463px"><svg class="fi" width="16" height="13" viewBox="0 0 16 13"><path d="M1 11.5V2Q1 .5 2.5 .5H6L8 2.5H13Q15.5 2.5 15.5 5V11Q15.5 12.5 14 12.5H2Q1 12.5 1 11.5Z" fill="#E6C35A" stroke="#A27F30"/><path d="M2 1.5H5.5" stroke="#F8E8B0"/><rect x="3.5" y="4.5" width="11" height="7" fill="#F8E89C" stroke="#C8A448" stroke-width=".9"/><path d="M4 5.5h10" stroke="#FFF8D0"/></svg><span class="nm">MimetypesRegistry</span><span class="ty">Filmappe</span><span class="dt">19-05-2006 17:34</span></div>
<div class="row" style="top:480px"><svg class="fi" width="16" height="13" viewBox="0 0 16 13"><path d="M1 11.5V2Q1 .5 2.5 .5H6L8 2.5H13Q15.5 2.5 15.5 5V11Q15.5 12.5 14 12.5H2Q1 12.5 1 11.5Z" fill="#E6C35A" stroke="#A27F30"/><path d="M2 1.5H5.5" stroke="#F8E8B0"/><rect x="3.5" y="4.5" width="11" height="7" fill="#F8E89C" stroke="#C8A448" stroke-width=".9"/><path d="M4 5.5h10" stroke="#FFF8D0"/></svg><span class="nm sel">MitNyeProdukt</span><span class="ty">Filmappe</span><span class="dt">08-06-2005 15:24</span></div>
<div class="row" style="top:497px"><svg class="fi" width="16" height="13" viewBox="0 0 16 13"><path d="M1 11.5V2Q1 .5 2.5 .5H6L8 2.5H13Q15.5 2.5 15.5 5V11Q15.5 12.5 14 12.5H2Q1 12.5 1 11.5Z" fill="#E6C35A" stroke="#A27F30"/><path d="M2 1.5H5.5" stroke="#F8E8B0"/><rect x="3.5" y="4.5" width="11" height="7" fill="#F8E89C" stroke="#C8A448" stroke-width=".9"/><path d="M4 5.5h10" stroke="#FFF8D0"/></svg><span class="nm">PageCacheManager</span><span class="ty">Filmappe</span><span class="dt">19-05-2006 09:51</span></div>
</div>

<div id="vs" class="a">
 <div class="a" style="left:1px;top:2px;width:15px;height:15px;border-radius:2px;border:1px solid #fff;background:linear-gradient(135deg,#C8D8FC,#B0C8F8)">
  <svg class="a" style="left:2px;top:3px" width="10" height="7" viewBox="0 0 10 7"><path d="M1 5.8L5 1.8 9 5.8" stroke="#4D6185" stroke-width="2.4" fill="none"/></svg></div>
 <div class="a" style="left:1px;top:18px;width:15px;height:277px;border-radius:2px;border:1px solid #fff;border-bottom-color:#A0B0D8;background:linear-gradient(90deg,#C8D0F8,#CCD8FC 50%,#B8CCF8)">
  <div class="a" style="left:3px;top:133px;width:8px;height:8px;background:repeating-linear-gradient(#EEF4FF 0 1px,#A4B8E8 1px 2px)"></div>
 </div>
 <div class="a" style="left:1px;top:494px;width:15px;height:15px;border-radius:2px;border:1px solid #fff;background:linear-gradient(135deg,#C8D8FC,#B0C8F8)">
  <svg class="a" style="left:2px;top:4px" width="10" height="7" viewBox="0 0 10 7"><path d="M1 1.2L5 5.2 9 1.2" stroke="#4D6185" stroke-width="2.4" fill="none"/></svg></div>
</div>

<div id="status" class="a">
 <div class="sep" style="left:390px;top:0px;height:21px"></div>
 <span class="st" style="left:396px">Bruger: kim</span>
 <div class="sep" style="left:515px;top:0px;height:21px"></div>
 <svg class="a" style="left:522px;top:4px" width="14" height="14" viewBox="0 0 14 14">
  <defs><radialGradient id="glb" cx="45%" cy="45%" r="60%"><stop offset="0" stop-color="#2050F0"/><stop offset=".7" stop-color="#1030C0"/><stop offset="1" stop-color="#081870"/></radialGradient></defs>
  <circle cx="7" cy="7" r="6.3" fill="url(#glb)"/>
  <path d="M2.5 3.5Q5 1 8.5 1.2Q7.5 3.5 5 4.5Q3.5 5 2.5 3.5Z" fill="#58C848"/>
  <path d="M9.5 6Q12 5 13 7Q12.5 10.5 10 11Q9 9 9.5 6Z" fill="#38A838"/>
  <path d="M1.2 8Q3 8.5 4 10.5Q3 11 2 10Z" fill="#40B040"/>
  <path d="M2 11.5Q7 14.5 12 11" stroke="#06104A" stroke-width="1.2" fill="none"/>
 </svg>
 <span class="st" style="left:541px;letter-spacing:0.5px">Internettet</span>
 <svg class="a" style="left:739px;top:9px" width="12" height="12" viewBox="0 0 12 12" fill="#A5A18E">
  <rect x="9" y="1" width="2" height="2"/><rect x="5" y="5" width="2" height="2"/><rect x="9" y="5" width="2" height="2"/>
  <rect x="1" y="9" width="2" height="2"/><rect x="5" y="9" width="2" height="2"/><rect x="9" y="9" width="2" height="2"/>
 </svg>
</div>
</body></html>
